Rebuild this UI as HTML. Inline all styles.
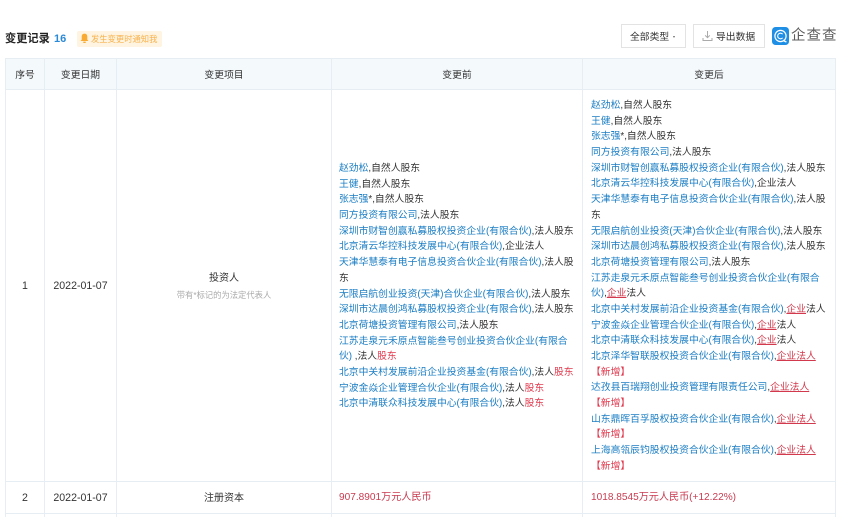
<!DOCTYPE html>
<html lang="zh-CN">
<head>
<meta charset="utf-8">
<title>变更记录</title>
<style>
html,body{margin:0;padding:0;background:#fff}
body{position:relative;width:842px;height:517px;overflow:hidden;font-family:"Liberation Sans","Noto Sans CJK SC",sans-serif;font-size:9.8px;color:#333}
.a{position:absolute;white-space:nowrap}
.l{position:absolute;background:#e6eef3}
.c{position:absolute;text-align:center;white-space:nowrap}
.col{position:absolute;line-height:15.7px;white-space:nowrap}
.col div{height:15.7px}
i{font-style:normal;color:#1a7dc4}
b{font-weight:normal;color:#e03a4e}
u{color:#d2394c;text-decoration:underline}
</style>
</head>
<body>
<div class="a" style="left:5px;top:31px;font-size:11.2px;line-height:16px;font-weight:bold;color:#222">变更记录</div>
<div class="a" style="left:54px;top:31px;font-size:11px;line-height:16px;font-weight:bold;color:#2b8ad6">16</div>
<div class="a" style="left:77px;top:31px;width:85px;height:16px;background:#fff4e1;border-radius:2px"></div>
<svg class="a" style="left:80px;top:33px" width="9" height="11" viewBox="0 0 9 11"><path d="M4.5 0.6C2.6 0.6 1.7 2 1.7 3.8V6.6L0.6 8H8.4L7.3 6.6V3.8C7.3 2 6.4 0.6 4.5 0.6Z" fill="#f8aa32"/><rect x="3.3" y="8.6" width="2.4" height="1.4" fill="#f8aa32"/></svg>
<div class="a" style="left:91px;top:31px;font-size:8.3px;line-height:16px;color:#f7b24d">发生变更时通知我</div>

<div class="a" style="left:621px;top:24px;width:63px;height:22px;border:1px solid #e3e3e3;box-sizing:content-box"></div>
<div class="a" style="left:630px;top:26px;line-height:24px;color:#333">全部类型</div>
<div class="a" style="left:672.5px;top:36px;width:0;height:0;border-left:1.5px solid transparent;border-right:1.5px solid transparent;border-top:2px solid #666"></div>
<div class="a" style="left:693px;top:24px;width:70px;height:22px;border:1px solid #e3e3e3"></div>
<svg class="a" style="left:702px;top:30px" width="11" height="12" viewBox="0 0 11 12"><path d="M5.5 1V7.5M3.2 5.4L5.5 7.7L7.8 5.4M1 8V10.5H10V8" fill="none" stroke="#aaa" stroke-width="1"/></svg>
<div class="a" style="left:716px;top:26px;line-height:24px;color:#333">导出数据</div>

<svg class="a" style="left:772px;top:27px" width="17" height="18" viewBox="0 0 17 18"><rect width="17" height="18" rx="3.5" fill="#1f8fe6"/><circle cx="8.5" cy="9" r="5.6" fill="none" stroke="#fff" stroke-width="1.2"/><path d="M10.6 7.2A2.8 2.8 0 1 0 10.6 10.8" fill="none" stroke="#fff" stroke-width="1.1"/><path d="M11 13.4L14.4 15" stroke="#fff" stroke-width="1.3"/></svg>
<div class="a" style="left:791px;top:26px;font-size:14.5px;line-height:21px;color:#5c5c5c;letter-spacing:1px">企查查</div>

<div class="a" style="left:5px;top:58px;width:831px;height:31px;background:#f4f9fc"></div>
<div class="l" style="left:5px;top:58px;width:831px;height:1px"></div>
<div class="l" style="left:5px;top:89px;width:831px;height:1px"></div>
<div class="l" style="left:5px;top:481px;width:831px;height:1px"></div>
<div class="l" style="left:5px;top:513px;width:831px;height:1px"></div>
<div class="l" style="left:5px;top:58px;width:1px;height:459px"></div>
<div class="l" style="left:44px;top:58px;width:1px;height:459px"></div>
<div class="l" style="left:116px;top:58px;width:1px;height:459px"></div>
<div class="l" style="left:331px;top:58px;width:1px;height:459px"></div>
<div class="l" style="left:582px;top:58px;width:1px;height:459px"></div>
<div class="l" style="left:835px;top:58px;width:1px;height:459px"></div>

<div class="c" style="left:5px;width:40px;top:68px;line-height:16px">序号</div>
<div class="c" style="left:44px;width:73px;top:68px;line-height:16px">变更日期</div>
<div class="c" style="left:116px;width:216px;top:68px;line-height:16px">变更项目</div>
<div class="c" style="left:331px;width:252px;top:68px;line-height:16px">变更前</div>
<div class="c" style="left:582px;width:254px;top:68px;line-height:16px">变更后</div>

<div class="c" style="left:5px;width:40px;top:278px;line-height:16px;font-size:10.6px">1</div>
<div class="c" style="left:44px;width:73px;top:278px;line-height:16px;font-size:10.6px">2022-01-07</div>
<div class="c" style="left:116px;width:216px;top:271px;line-height:16px;font-size:10px">投资人</div>
<div class="c" style="left:116px;width:216px;top:288px;line-height:14px;font-size:8.3px;color:#aaa">带有*标记的为法定代表人</div>

<div class="c" style="left:5px;width:40px;top:490px;line-height:16px;font-size:10.6px">2</div>
<div class="c" style="left:44px;width:73px;top:490px;line-height:16px;font-size:10.6px">2022-01-07</div>
<div class="c" style="left:116px;width:216px;top:491px;line-height:16px;font-size:10px">注册资本</div>
<div class="a" style="left:339px;top:490px;line-height:16px;font-size:10.1px;color:#c93b50">907.8901万元人民币</div>
<div class="a" style="left:591px;top:490px;line-height:16px;font-size:10.1px;color:#c93b50">1018.8545万元人民币(+12.22%)</div>

<div class="col" style="left:339px;top:161px">
<div><i>赵劲松</i>,自然人股东</div>
<div><i>王健</i>,自然人股东</div>
<div><i>张志强</i>*,自然人股东</div>
<div><i>同方投资有限公司</i>,法人股东</div>
<div><i>深圳市财智创赢私募股权投资企业(有限合伙)</i>,法人股东</div>
<div><i>北京清云华控科技发展中心(有限合伙)</i>,企业法人</div>
<div><i>天津华慧泰有电子信息投资合伙企业(有限合伙)</i>,法人股</div>
<div>东</div>
<div><i>无限启航创业投资(天津)合伙企业(有限合伙)</i>,法人股东</div>
<div><i>深圳市达晨创鸿私募股权投资企业(有限合伙)</i>,法人股东</div>
<div><i>北京荷塘投资管理有限公司</i>,法人股东</div>
<div><i>江苏走泉元禾原点智能叁号创业投资合伙企业(有限合</i></div>
<div><i>伙)</i> ,法人<b>股东</b></div>
<div><i>北京中关村发展前沿企业投资基金(有限合伙)</i>,法人<b>股东</b></div>
<div><i>宁波金焱企业管理合伙企业(有限合伙)</i>,法人<b>股东</b></div>
<div><i>北京中清联众科技发展中心(有限合伙)</i>,法人<b>股东</b></div>
</div>

<div class="col" style="left:591px;top:98px">
<div><i>赵劲松</i>,自然人股东</div>
<div><i>王健</i>,自然人股东</div>
<div><i>张志强</i>*,自然人股东</div>
<div><i>同方投资有限公司</i>,法人股东</div>
<div><i>深圳市财智创赢私募股权投资企业(有限合伙)</i>,法人股东</div>
<div><i>北京清云华控科技发展中心(有限合伙)</i>,企业法人</div>
<div><i>天津华慧泰有电子信息投资合伙企业(有限合伙)</i>,法人股</div>
<div>东</div>
<div><i>无限启航创业投资(天津)合伙企业(有限合伙)</i>,法人股东</div>
<div><i>深圳市达晨创鸿私募股权投资企业(有限合伙)</i>,法人股东</div>
<div><i>北京荷塘投资管理有限公司</i>,法人股东</div>
<div><i>江苏走泉元禾原点智能叁号创业投资合伙企业(有限合</i></div>
<div><i>伙)</i>,<u>企业</u>法人</div>
<div><i>北京中关村发展前沿企业投资基金(有限合伙)</i>,<u>企业</u>法人</div>
<div><i>宁波金焱企业管理合伙企业(有限合伙)</i>,<u>企业</u>法人</div>
<div><i>北京中清联众科技发展中心(有限合伙)</i>,<u>企业</u>法人</div>
<div><i>北京泽华智联股权投资合伙企业(有限合伙)</i>,<u>企业法人</u></div>
<div><b>【新增】</b></div>
<div><i>达孜县百瑞翔创业投资管理有限责任公司</i>,<u>企业法人</u></div>
<div><b>【新增】</b></div>
<div><i>山东鼎晖百孚股权投资合伙企业(有限合伙)</i>,<u>企业法人</u></div>
<div><b>【新增】</b></div>
<div><i>上海高瓴辰钧股权投资合伙企业(有限合伙)</i>,<u>企业法人</u></div>
<div><b>【新增】</b></div>
</div>
</body>
</html>
